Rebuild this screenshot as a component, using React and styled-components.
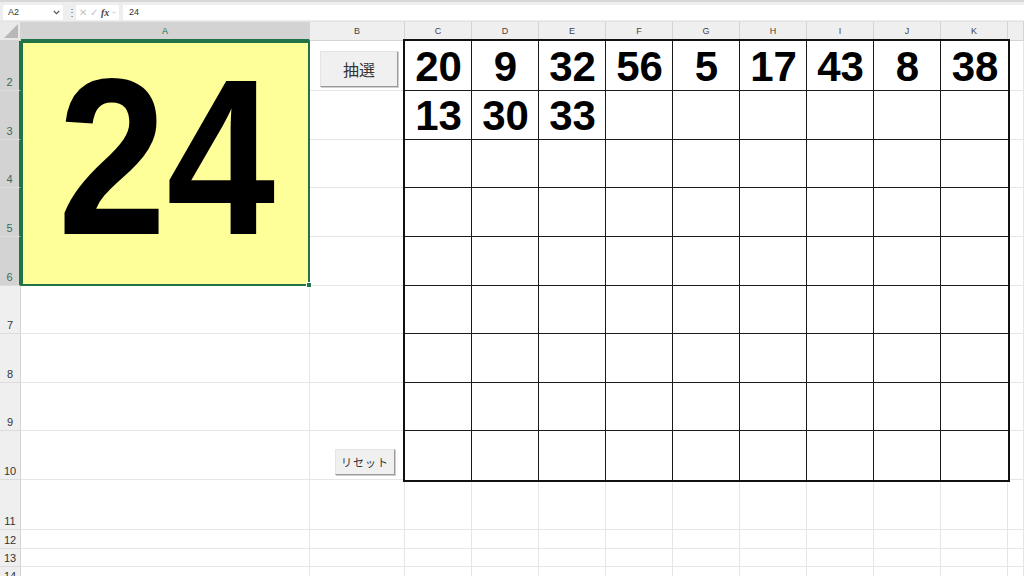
import React from "react";
import styled, { createGlobalStyle } from "styled-components";

const COLS = ["A", "B", "C", "D", "E", "F", "G", "H", "I", "J", "K", ""];
const COL_WIDTHS = [289, 95, 67, 67, 67, 67, 67, 67, 67, 67, 67, 16];
const ROWS = [2, 3, 4, 5, 6, 7, 8, 9, 10, 11, 12, 13, 14];
const ROW_HEIGHTS = [50, 49, 48, 49, 49, 48, 49, 48, 49, 50, 19, 18, 18];
const DRAWN = [20, 9, 32, 56, 5, 17, 43, 8, 38, 13, 30, 33];
const GREEN = "#217346";

const GlobalStyle = createGlobalStyle`
  html, body {
    margin: 0;
    padding: 0;
    background: #fff;
    overflow: hidden;
  }
  * { box-sizing: border-box; }
`;

const Window = styled.div`
  width: 1024px;
  height: 576px;
  display: flex;
  flex-direction: column;
  font-family: "Liberation Sans", Arial, sans-serif;
  overflow: hidden;
`;

const FormulaBar = styled.div`
  flex-shrink: 0;
  height: 22px;
  display: flex;
  align-items: center;
  gap: 4px;
  padding: 1px 0 0 3px;
  background: #eeeeee;
  border-top: 2px solid #d8d8d8;
  border-bottom: 1px solid #e2e2e2;
`;

const NameBox = styled.div`
  width: 60px;
  height: 15px;
  background: #fff;
  border-radius: 2px;
  display: flex;
  align-items: center;
  justify-content: space-between;
  padding: 0 3px 0 5px;
  font-size: 9px;
  color: #333;
`;

const Grip = styled.span`
  font-size: 10px;
  color: #666;
  width: 5px;
  text-align: center;
`;

const FxBox = styled.div`
  width: 43px;
  height: 15px;
  background: #fff;
  border-radius: 2px;
  display: flex;
  align-items: center;
  gap: 3px;
  padding: 0 3px;
  font-size: 10px;
  color: #c2c2c2;
`;

const Fx = styled.span`
  font-family: "Liberation Serif", serif;
  font-style: italic;
  font-weight: 700;
  color: #444;
  font-size: 10px;
`;

const FormulaInput = styled.div`
  flex: 1;
  height: 15px;
  background: #fff;
  display: flex;
  align-items: center;
  padding-left: 6px;
  font-size: 9px;
  color: #333;
`;

const Sheet = styled.div`
  flex-shrink: 0;
  display: grid;
  grid-template-columns: 21px ${COL_WIDTHS.map((w) => `${w}px`).join(" ")};
  grid-template-rows: 19px ${ROW_HEIGHTS.map((h) => `${h}px`).join(" ")};
  background: #fff;
`;

const Corner = styled.div`
  position: relative;
  background: #e9e9e9;
  border-right: 1px solid #d4d4d4;
  border-bottom: 1px solid #d4d4d4;
  &::after {
    content: "";
    position: absolute;
    right: 2px;
    bottom: 2px;
    width: 0;
    height: 0;
    border-left: 14px solid transparent;
    border-bottom: 14px solid #b8b8b8;
  }
`;

const ColHeader = styled.div`
  display: flex;
  align-items: center;
  justify-content: center;
  font-size: 9px;
  background: ${(p) => (p.$active ? "#d3d3d3" : "#efefef")};
  color: ${(p) => (p.$active ? GREEN : "#444")};
  border-right: 1px solid #d4d4d4;
  border-bottom: ${(p) => (p.$active ? `2px solid ${GREEN}` : "1px solid #d4d4d4")};
`;

const RowHeader = styled.div`
  display: flex;
  align-items: flex-end;
  justify-content: center;
  padding-bottom: 2px;
  font-size: 11px;
  background: ${(p) => (p.$active ? "#d3d3d3" : "#efefef")};
  color: ${(p) => (p.$active ? "#3d6b55" : "#333")};
  border-right: ${(p) => (p.$active ? `2px solid ${GREEN}` : "1px solid #d4d4d4")};
  border-bottom: 1px solid #dcdcdc;
`;

const Cell = styled.div`
  display: flex;
  align-items: ${(p) => (p.$bottom ? "flex-end" : "flex-start")};
  justify-content: ${(p) => (p.$bottom ? "flex-end" : "flex-start")};
  padding: ${(p) => p.$pad || "0"};
  border-right: 1px solid #e6e6e6;
  border-bottom: 1px solid #e6e6e6;
`;

const ResultCell = styled.div`
  position: relative;
  grid-column: 2 / 3;
  grid-row: 2 / 7;
  background: #ffff99;
  border: 2px solid ${GREEN};
  display: flex;
  align-items: center;
  justify-content: center;
  padding: 0 0 14px 2px;
`;

const BigNumber = styled.span`
  font-family: "Liberation Sans", Arial, sans-serif;
  font-weight: 700;
  font-size: 222px;
  line-height: 1;
  color: #000;
  transform: scaleX(0.88);
`;

const FillHandle = styled.span`
  position: absolute;
  right: -4px;
  bottom: -4px;
  width: 6px;
  height: 6px;
  background: ${GREEN};
  border: 1px solid #fff;
`;

const FormButton = styled.button`
  font-family: "Noto Sans CJK JP", "Liberation Sans", sans-serif;
  font-size: ${(p) => p.$size}px;
  width: ${(p) => p.$w}px;
  height: ${(p) => p.$h}px;
  padding: 0;
  color: #333;
  background: #f0f0f0;
  border: 1px solid #e4e4e4;
  border-right-color: #9a9a9a;
  border-bottom-color: #9a9a9a;
  box-shadow: 1px 1px 0 #d0d0d0;
  letter-spacing: ${(p) => p.$spacing || 0}px;
  line-height: 1;
`;

const Board = styled.div`
  grid-column: 4 / 13;
  grid-row: 2 / 11;
  margin: -1px -1px -1px -1px;
  display: grid;
  grid-template-columns: repeat(9, 67px);
  grid-template-rows: ${ROW_HEIGHTS.slice(0, 9).map((h) => `${h}px`).join(" ")};
  border: 1px solid #111;
  box-shadow: 0 0 0 1px #111;
  background: #fff;
`;

const BoardCell = styled.div`
  display: flex;
  align-items: center;
  justify-content: center;
  padding: 2px 0 0 1px;
  font-family: "Liberation Sans", Arial, sans-serif;
  font-weight: 700;
  font-size: 42px;
  line-height: 1;
  color: #000;
  border-right: ${(p) => (p.$lastCol ? "none" : "1px solid #1a1a1a")};
  border-bottom: ${(p) => (p.$lastRow ? "none" : "1px solid #1a1a1a")};
`;

function Chevron({ color = "#555" }) {
  return (
    <svg width="7" height="5" viewBox="0 0 7 5">
      <path d="M0.8 1 L3.5 3.7 L6.2 1" fill="none" stroke={color} strokeWidth="1.1" />
    </svg>
  );
}

function BingoBoard() {
  const cells = Array.from({ length: 81 }, (_, i) => DRAWN[i]);
  return (
    <Board>
      {cells.map((n, i) => (
        <BoardCell key={i} $lastCol={i % 9 === 8} $lastRow={i >= 72}>
          {n ?? ""}
        </BoardCell>
      ))}
    </Board>
  );
}

function renderCell(row, colIndex) {
  const key = `${row}-${colIndex}`;
  if (colIndex === 0 && row >= 2 && row <= 6) {
    if (row !== 2) return null;
    return (
      <ResultCell key={key}>
        <BigNumber>24</BigNumber>
        <FillHandle />
      </ResultCell>
    );
  }
  if (colIndex >= 2 && colIndex <= 10 && row <= 10) return null;
  if (colIndex === 1 && row === 2) {
    return (
      <Cell key={key} $pad="10px 0 0 10px">
        <FormButton $w={78} $h={36} $size={16}>抽選</FormButton>
      </Cell>
    );
  }
  if (colIndex === 1 && row === 10) {
    return (
      <Cell key={key} $bottom $pad="0 9px 4px 0">
        <FormButton $w={60} $h={26} $size={11} $spacing={1}>リセット</FormButton>
      </Cell>
    );
  }
  return <Cell key={key} />;
}

export default function App() {
  return (
    <Window>
      <GlobalStyle />
      <FormulaBar>
        <NameBox>
          A2
          <Chevron />
        </NameBox>
        <Grip>⋮</Grip>
        <FxBox>
          <span>✕</span>
          <span>✓</span>
          <Fx>fx</Fx>
          <Chevron color="#999" />
        </FxBox>
        <FormulaInput>24</FormulaInput>
      </FormulaBar>
      <Sheet>
        <Corner />
        {COLS.map((c, i) => (
          <ColHeader key={`h${i}`} $active={c === "A"}>
            {c}
          </ColHeader>
        ))}
        {ROWS.map((row, ri) => (
          <React.Fragment key={row}>
            <RowHeader style={{ gridRow: ri + 2, gridColumn: 1 }} $active={row <= 6}>
              {row}
            </RowHeader>
            {COLS.map((_, ci) => renderCell(row, ci))}
          </React.Fragment>
        ))}
        <BingoBoard />
      </Sheet>
    </Window>
  );
}
